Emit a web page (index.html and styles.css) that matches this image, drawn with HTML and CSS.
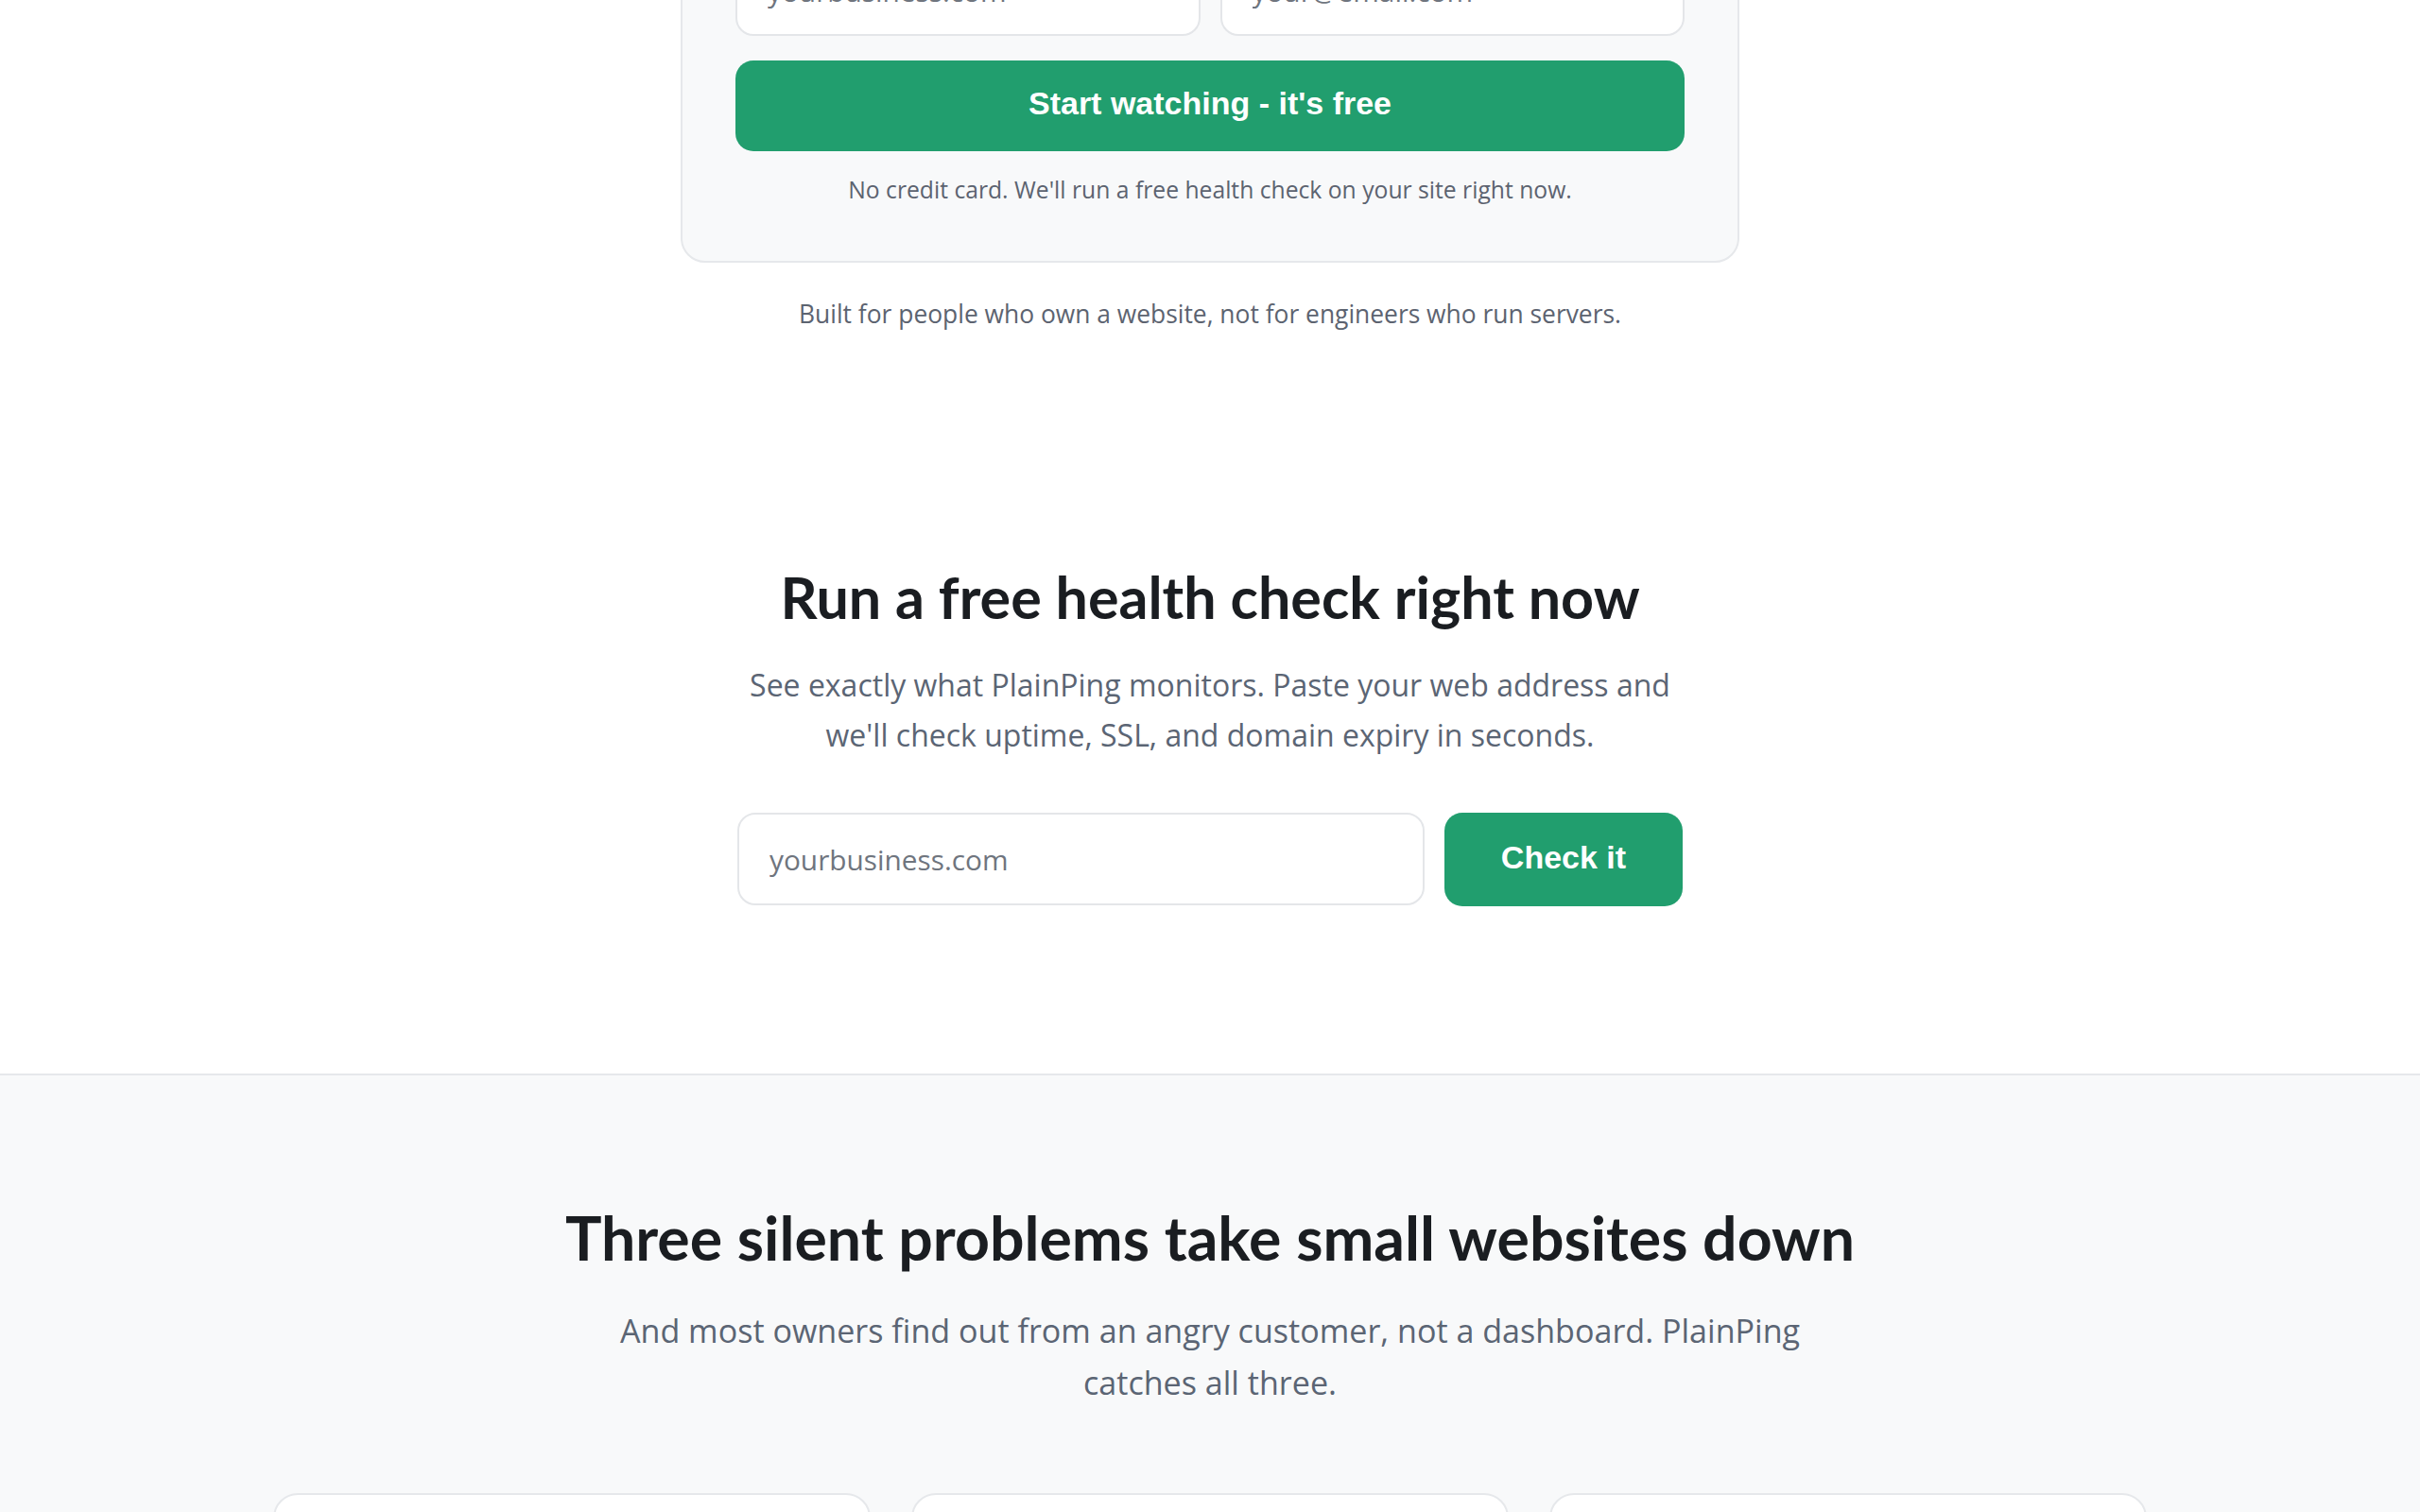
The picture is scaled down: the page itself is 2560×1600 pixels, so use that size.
FILE: index.html
```html
<!DOCTYPE html>
<html>
<head>
    <title>PlainPing - Website monitoring for owners</title>
    <link rel="stylesheet" href="styles.css">
</head>
<body>
    <section class="hero">
        <div class="signup-card">
            <form class="signup-form">
                <div class="field-row">
                    <input class="field" type="text" placeholder="yourbusiness.com">
                    <input class="field" type="email" placeholder="your@email.com">
                </div>
                <button class="btn btn-wide" type="button">Start watching - it's free</button>
                <p class="fine-print">No credit card. We'll run a free health check on your site right now.</p>
            </form>
        </div>
        <p class="hero-note">Built for people who own a website, not for engineers who run servers.</p>
    </section>

    <section class="check">
        <h2 class="check-title">Run a free health check right now</h2>
        <p class="lead">See exactly what PlainPing monitors. Paste your web address and we'll check uptime, SSL, and domain expiry in seconds.</p>
        <form class="check-form">
            <input class="field" type="text" placeholder="yourbusiness.com">
            <button class="btn btn-check" type="button">Check it</button>
        </form>
    </section>

    <section class="problems">
        <h2 class="problems-title">Three silent problems take small websites down</h2>
        <p class="lead lead-wide">And most owners find out from an angry customer, not a dashboard. PlainPing catches all three.</p>
        <div class="problem-grid">
            <div class="problem-card"></div>
            <div class="problem-card"></div>
            <div class="problem-card"></div>
        </div>
    </section>
</body>
</html>
```

FILE: styles.css
```css
* {
    margin: 0;
    padding: 0;
    box-sizing: border-box;
}

body {
    font-family: "Open Sans", Lato, sans-serif;
    color: #1a1d21;
    background: #ffffff;
}

h2 {
    font-family: Lato, "Open Sans", sans-serif;
    font-weight: bold;
}

/* page is shown scrolled down past the hero header */
.hero {
    margin-top: -116px;
    text-align: center;
}

.signup-card {
    width: 1120px;
    margin: 0 auto;
    padding: 56px;
    background: #f8f9fa;
    border: 2px solid #e6e8eb;
    border-radius: 26px;
}

.field-row {
    display: grid;
    grid-template-columns: 1fr 1fr;
    gap: 21px;
}

.field {
    height: 96px;
    padding: 0 32px;
    font-family: "Open Sans", Lato, sans-serif;
    font-size: 29.8px;
    color: #1a1d21;
    background: #ffffff;
    border: 2px solid #e4e6e9;
    border-radius: 19px;
    outline: none;
}

.field::placeholder {
    color: #6f757e;
}

.btn {
    padding-bottom: 5px;
    font-family: "Liberation Sans", Arial, sans-serif;
    font-weight: bold;
    font-size: 34px;
    color: #ffffff;
    background: #219e6e;
    border: none;
    border-radius: 19px;
    cursor: pointer;
}

.btn-wide {
    display: block;
    width: 100%;
    height: 96px;
    margin-top: 26px;
}

.fine-print {
    margin-top: 22px;
    font-size: 24.7px;
    line-height: 38px;
    color: #5c6370;
}

.hero-note {
    margin-top: 33px;
    font-size: 26.4px;
    line-height: 43px;
    color: #5c6370;
}

.check {
    padding: 243px 0 177px;
    text-align: center;
}

.check-title {
    font-size: 61px;
    line-height: 70px;
}

.lead {
    max-width: 1010px;
    margin: 31px auto 0;
    font-size: 32px;
    line-height: 53px;
    color: #5b6574;
}

.check-form {
    display: flex;
    gap: 21px;
    width: 1000px;
    margin: 56px auto 0;
}

.check-form .field {
    flex: 1;
    height: 98px;
}

.btn-check {
    flex: 0 0 252px;
    height: 99px;
}

.problems {
    padding: 134px 0 120px;
    text-align: center;
    background: #f8f9fa;
    border-top: 2px solid #e6e8eb;
}

.problems-title {
    font-size: 64.4px;
    line-height: 74px;
}

.lead-wide {
    max-width: 1300px;
    margin-top: 35px;
    font-size: 34.1px;
    line-height: 55px;
}

.problem-grid {
    display: grid;
    grid-template-columns: repeat(3, 1fr);
    gap: 43px;
    max-width: 1982px;
    margin: 89px auto 0;
}

.problem-card {
    min-height: 320px;
    background: #ffffff;
    border: 2px solid #e6e8eb;
    border-radius: 26px;
}
```
